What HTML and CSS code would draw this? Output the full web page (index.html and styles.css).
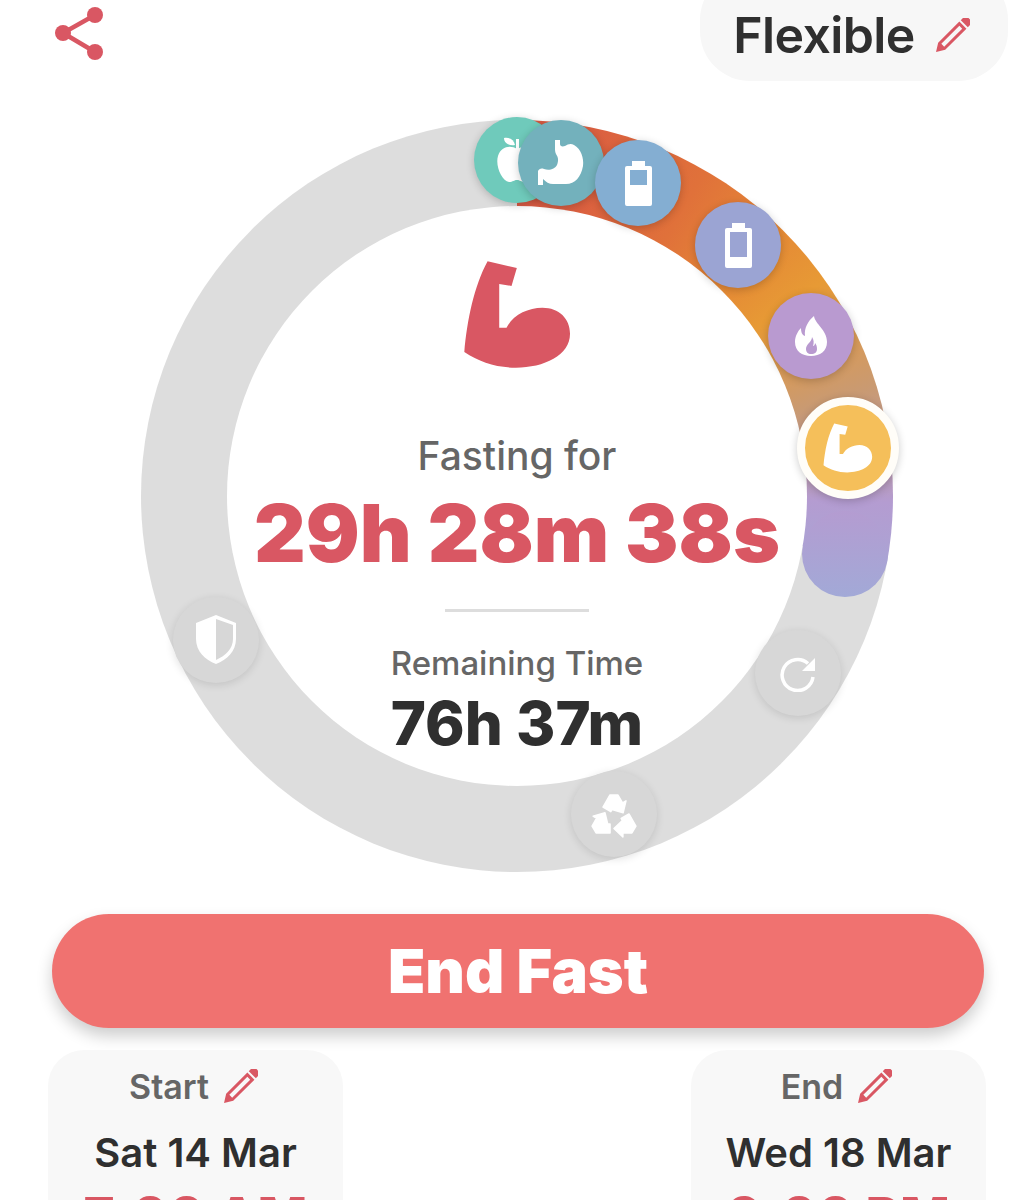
FILE: index.html
```html
<!DOCTYPE html>
<html lang="en">
<head>
    <meta charset="UTF-8">
    <meta name="viewport" content="width=device-width, initial-scale=1.0">
    <title>Fasting Timer</title>
    <link rel="stylesheet" href="styles.css">
</head>
<body>
    <!-- Shared icons -->
    <svg class="icon-defs" aria-hidden="true">
        <symbol id="i-muscle" viewBox="60 52 340 340">
            <path d="M140 62 L228 82 L212 136 L175 130 V262 H197 C215 225 260 202 305 202 C355 202 388 235 388 280 C388 345 310 382 225 382 C165 382 115 365 70 335 C78 240 100 135 140 62Z"/>
        </symbol>
        <symbol id="i-pencil" viewBox="0 0 34 34">
            <g transform="rotate(45 17 17)">
                <rect x="12" y="-6" width="10" height="7"/>
                <path fill-rule="evenodd" d="M12 3 H22 V33 L17 41 L12 33Z M15 6 V31.500 H19 V6Z"/>
            </g>
        </symbol>
    </svg>

    <div class="page">
        <div class="top-bar">
            <svg class="share" viewBox="0 0 50 54">
                <path class="share-line" d="M40 8 L8 26 L40 45"/>
                <circle cx="8" cy="26" r="8"/>
                <circle cx="40" cy="8" r="8"/>
                <circle cx="40" cy="45" r="8"/>
            </svg>
            <div class="plan-pill">
                <span class="plan-name">Flexible</span>
                <svg class="pencil"><use href="#i-pencil"/></svg>
            </div>
        </div>

        <!-- Progress dial with the stage markers around it -->
        <div class="dial">
            <div class="ring">
                <div class="ring-end"></div>
                <div class="ring-hole"></div>
            </div>

            <div class="dial-content">
                <svg class="muscle-big"><use href="#i-muscle"/></svg>
                <div class="fasting-label">Fasting for</div>
                <div class="fasting-time">29h 28m 38s</div>
                <div class="divider"></div>
                <div class="remaining-label">Remaining Time</div>
                <div class="remaining-time">76h 37m</div>
            </div>

            <div class="node node-apple">
                <svg viewBox="0 0 48 48" width="48" height="48">
                    <path d="M24 13 C18 9 8 10 5 20 C2 30 9 45 16 46 C20 46 21 44 24 44 C27 44 28 46 32 46 C39 45 45 32 44 27 C38 24 37 14 42 12 C38 9 29 10 24 13Z"/>
                    <path d="M11 2 C17 1 21 4 22 9 C16 10 11 7 11 2Z"/>
                    <rect x="23" y="3" width="3" height="10"/>
                </svg>
            </div>
            <div class="node node-stomach">
                <svg viewBox="0 0 46 46" width="46" height="46">
                    <path d="M17 0 H22 V4 C22 6 24 7 27 6 C30 4 33 3 36 5 C43 9 46 18 45 26 C43 37 37 44 28 44 H15 C11 44 8 42 5 39 V45 H0 V31 C1 29 3 28 6 29 C11 31 17 29 19 25 C21 20 20 17 18 14 C17 12 17 10 17 8Z"/>
                </svg>
            </div>
            <div class="node node-battery-high">
                <svg viewBox="0 0 27 45" width="27" height="45">
                    <path fill-rule="evenodd" d="M7 0 H20 V5 H25 Q27 5 27 7 V43 Q27 45 25 45 H2 Q0 45 0 43 V7 Q0 5 2 5 H7Z M5 9 V24 H22 V9Z"/>
                </svg>
            </div>
            <div class="node node-battery-low">
                <svg viewBox="0 0 27 45" width="27" height="45">
                    <path fill-rule="evenodd" d="M7 0 H20 V5 H25 Q27 5 27 7 V43 Q27 45 25 45 H2 Q0 45 0 43 V7 Q0 5 2 5 H7Z M5 9 V34 H22 V9Z"/>
                </svg>
            </div>
            <div class="node node-flame">
                <svg viewBox="0 0 32 40" width="32" height="40">
                    <path fill-rule="evenodd" d="M19 0 C20 8 32 14 32 26 C32 35 25 40 16 40 C7 40 0 35 0 26 C0 20 3 15 6 12 C6 16 7 19 10 20 C9 12 13 5 19 0Z M17 21 C17 26 11 28 11 33 C11 36 13 38 16 38 C20 38 22 36 22 33 C22 30 21 28 20 27 C20 29 19 30 18 30 C19 27 19 24 17 21Z"/>
                </svg>
            </div>
            <div class="node node-current">
                <svg class="muscle-small"><use href="#i-muscle"/></svg>
            </div>
            <div class="node node-grey node-shield">
                <svg viewBox="0 0 42 50" width="42" height="50">
                    <path fill-rule="evenodd" d="M21 0 L41 8 V24 C41 36 32 45 21 49 C10 45 1 36 1 24 V8Z M21 4 V45 C30 41 38 34 38 24 V10Z"/>
                </svg>
            </div>
            <div class="node node-grey node-refresh">
                <svg viewBox="0 0 38 38" width="38" height="38">
                    <path class="refresh-arc" d="M29 9.500 A15.500 15.500 0 1 0 34 23"/>
                    <path d="M36 4 V17 H23Z"/>
                </svg>
            </div>
            <div class="node node-grey node-recycle">
                <svg viewBox="-24 -28 48 48" width="48" height="48">
                    <polygon class="recycle-arm" id="recycle-arm" points="-11,-10.900 -4,-23 4,-23 8.500,-15.200 12,-17.200 9.100,-5.200 -2.800,-8.700 0.700,-10.700 0,-11.900 -3.200,-6.400"/>
                    <use href="#recycle-arm" transform="rotate(120)"/>
                    <use href="#recycle-arm" transform="rotate(240)"/>
                </svg>
            </div>
        </div>

        <button class="end-btn">End Fast</button>

        <div class="times">
            <div class="time-card">
                <div class="time-head">
                    <span>Start</span>
                    <svg class="pencil"><use href="#i-pencil"/></svg>
                </div>
                <div class="time-date">Sat 14 Mar</div>
                <div class="time-hour">7:00 AM</div>
            </div>
            <div class="time-card">
                <div class="time-head">
                    <span>End</span>
                    <svg class="pencil"><use href="#i-pencil"/></svg>
                </div>
                <div class="time-date">Wed 18 Mar</div>
                <div class="time-hour">9:00 PM</div>
            </div>
        </div>
    </div>
</body>
</html>
```

FILE: styles.css
```css
html, body {
    margin: 0;
    height: 1200px;
    overflow: hidden;
    background-color: #fff;
}
body {
    font-family: Inter, "Noto Sans", sans-serif;
}
.icon-defs {
    display: none;
}
.page {
    height: 1200px;
    overflow: hidden;
}

/* top row */
.top-bar {
    display: flex;
    justify-content: space-between;
    align-items: flex-start;
    height: 81px;
    padding: 0 27px 0 55px;
}
.share {
    width: 50px;
    height: 54px;
    margin-top: 7px;
    fill: #d95763;
}
.share-line {
    fill: none;
    stroke: #d95763;
    stroke-width: 4.5;
}
.plan-pill {
    display: flex;
    align-items: center;
    justify-content: center;
    gap: 21px;
    box-sizing: border-box;
    width: 308px;
    height: 111px;
    margin-top: -30px;
    padding: 18px 5px 0 0;
    background-color: #f7f7f7;
    border-radius: 50px;
}
.plan-name {
    font-size: 50px;
    font-weight: 600;
    letter-spacing: -0.6px;
    color: #2f2f2f;
}
.pencil {
    width: 34px;
    height: 34px;
    fill: #d95763;
}

/* dial */
.dial {
    position: relative;
    width: 752px;
    height: 752px;
    margin: 39px 0 0 141px;
}
.ring {
    position: absolute;
    inset: 0;
    border-radius: 50%;
    background: conic-gradient(#d85a45 0deg, #db6040 12deg, #e0713a 30deg, #e48536 42deg, #e79a35 55deg, #d89a58 65deg, #c99a72 73deg, #bf9a9a 82deg, #b49cd1 91deg, #aba3d4 100deg, #ddd 100deg);
}
.ring-end {
    position: absolute;
    left: 661px;
    top: 391px;
    width: 86px;
    height: 86px;
    border-radius: 50%;
    background: linear-gradient(#b49cd1, #a2a9d7);
}
.ring-hole {
    position: absolute;
    inset: 86px;
    border-radius: 50%;
    background-color: #fff;
}
.dial-content {
    position: absolute;
    inset: 0;
    display: flex;
    flex-direction: column;
    align-items: center;
    padding-top: 138px;
    box-sizing: border-box;
    text-align: center;
}
.muscle-big {
    width: 113px;
    height: 113px;
    flex-shrink: 0;
    fill: #d95763;
}
.fasting-label {
    margin-top: 63px;
    font-size: 39px;
    line-height: 44px;
    font-weight: 500;
    color: #666;
}
.fasting-time {
    margin-top: 8px;
    font-size: 80px;
    line-height: 94px;
    font-weight: 900;
    color: #d95763;
    white-space: nowrap;
}
.divider {
    width: 144px;
    height: 3px;
    margin-top: 29px;
    background-color: #ddd;
}
.remaining-label {
    margin-top: 32px;
    font-size: 33px;
    line-height: 38px;
    font-weight: 500;
    color: #666;
}
.remaining-time {
    margin-top: 6px;
    font-size: 60px;
    line-height: 70px;
    font-weight: 800;
    color: #2f2f2f;
    white-space: nowrap;
}

/* stage markers sit on the ring */
.node {
    position: absolute;
    display: flex;
    align-items: center;
    justify-content: center;
    width: 86px;
    height: 86px;
    border-radius: 50%;
    box-shadow: 0 2px 8px rgba(0, 0, 0, 0.2);
    fill: #fff;
}
.node-apple {
    left: 333px;
    top: -3px;
    background-color: #6fcabb;
}
.node-stomach {
    left: 377px;
    top: 0;
    background-color: #73b1bc;
}
.node-battery-high {
    left: 454px;
    top: 20px;
    background-color: #84aed2;
}
.node-battery-low {
    left: 554px;
    top: 82px;
    background-color: #9ba4d3;
}
.node-flame {
    left: 627px;
    top: 173px;
    background-color: #b99ad0;
}
.node-current {
    left: 656px;
    top: 277px;
    width: 102px;
    height: 102px;
    box-sizing: border-box;
    border: 8px solid #fffdf8;
    background-color: #f5bf5a;
}
.muscle-small {
    width: 52px;
    height: 52px;
}
.node-grey {
    background-color: #d7d7d7;
    box-shadow: 0 2px 8px rgba(0, 0, 0, 0.12);
}
.node-shield {
    left: 32px;
    top: 477px;
}
.node-refresh {
    left: 614px;
    top: 510px;
}
.node-recycle {
    left: 430px;
    top: 651px;
}
.refresh-arc {
    fill: none;
    stroke: #fff;
    stroke-width: 3.5;
}
.recycle-arm {
    stroke: #fff;
    stroke-width: 1.5;
    stroke-linejoin: round;
}

/* end button */
.end-btn {
    display: block;
    width: 932px;
    height: 114px;
    margin: 42px 0 0 52px;
    padding: 0;
    border: none;
    border-radius: 57px;
    background-color: #f07270;
    box-shadow: 0 8px 16px rgba(0, 0, 0, 0.2);
    font-family: inherit;
    font-size: 61px;
    font-weight: 900;
    color: #fff;
    cursor: pointer;
}

/* start and end cards */
.times {
    display: flex;
    justify-content: space-between;
    margin: 22px 49px 0 48px;
}
.time-card {
    width: 295px;
    height: 200px;
    padding-top: 16px;
    box-sizing: border-box;
    background-color: #f8f8f8;
    border-radius: 36px;
    text-align: center;
}
.time-head {
    display: flex;
    align-items: center;
    justify-content: center;
    gap: 15px;
    height: 40px;
    padding-right: 4px;
    font-size: 34px;
    font-weight: 600;
    color: #666;
}
.time-date {
    margin-top: 25px;
    font-size: 40px;
    line-height: 44px;
    font-weight: 600;
    color: #2f2f2f;
}
.time-hour {
    margin-top: 10px;
    font-size: 53px;
    line-height: 64px;
    font-weight: 800;
    color: #d95763;
}
```
